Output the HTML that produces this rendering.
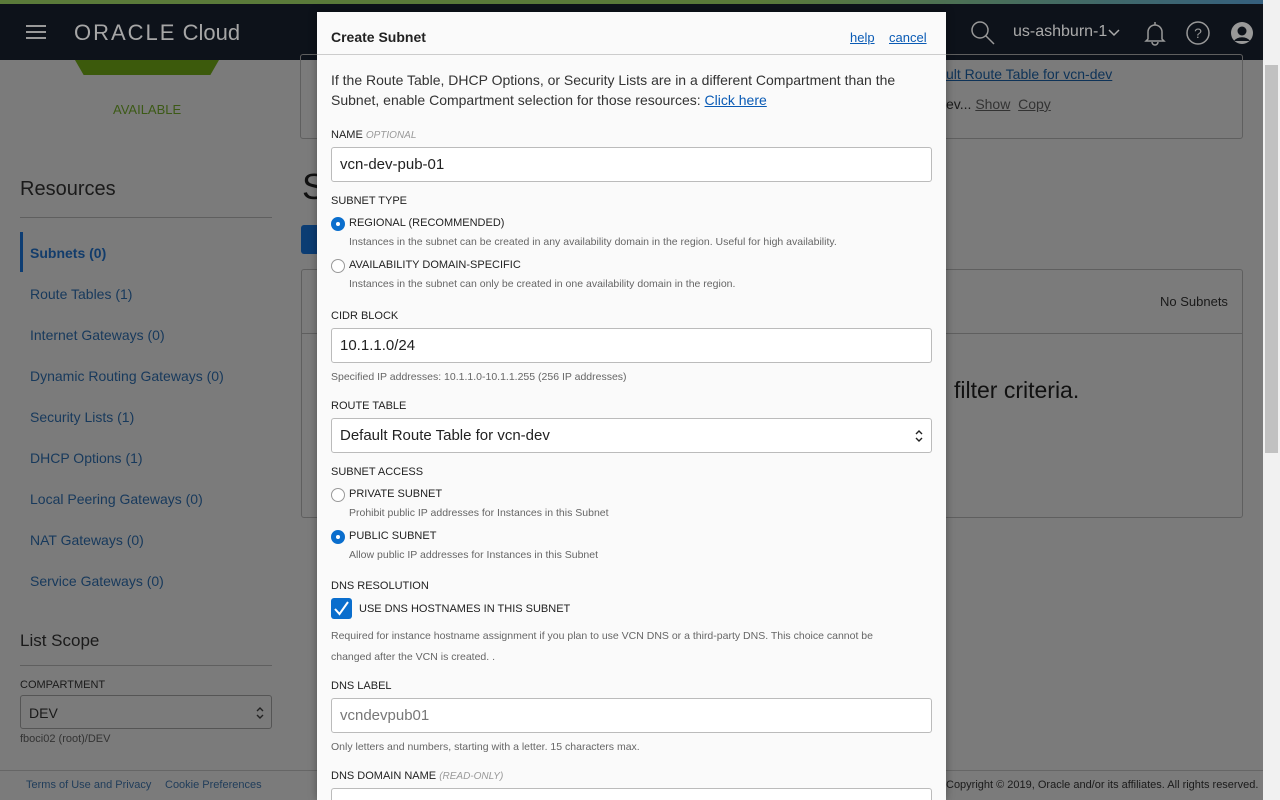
<!DOCTYPE html>
<html style="overflow:hidden;width:1280px;height:800px"><head><meta charset="utf-8"><style>
*{box-sizing:border-box;margin:0;padding:0}
body{width:1280px;height:800px;overflow:hidden;position:relative;background:#7b7b7b;font-family:"Liberation Sans",sans-serif;color:#1e1e1e}
.abs{position:absolute}
.stripe{left:0;top:0;width:1263px;height:4px;background:linear-gradient(90deg,#5a7a3a,#5a7a3a 60%,#35607e)}
.nav{left:0;top:4px;width:1263px;height:56px;background:#0d121a}
.sb{left:1263px;top:0;width:17px;height:800px;background:#f1f1f1}
.thumb{left:1265px;top:65px;width:13px;height:388px;background:#c1c1c1}
.side{position:absolute;left:30px;font-size:14px;color:#17395c}
.modal{left:317px;top:12px;width:629px;height:788px;overflow:hidden;background:#fafafa;box-shadow:0 0 8px rgba(0,0,0,.35)}
.m{position:absolute;left:14px}
.lbl{font-size:11px;color:#222;text-transform:uppercase}
.inp{position:absolute;left:14px;width:601px;height:35px;border:1px solid #bbb;border-radius:3px;background:#fff;font-size:15px;padding:8px 8px;color:#222}
.hint{font-size:10.5px;color:#666}
.radio{position:absolute;left:14px;width:14px;height:14px;border-radius:50%;border:1px solid #999;background:#fff}
.radio.on{background:#0a6ecd;border-color:#0a6ecd}
.radio.on::after{content:"";position:absolute;left:4px;top:4px;width:4px;height:4px;border-radius:50%;background:#fff}
.rl{position:absolute;left:32px;font-size:11px;color:#222}
.rh{position:absolute;left:32px;font-size:10.5px;color:#666}
</style></head><body>
<div class="abs stripe"></div>
<div class="abs nav">
 <div class="abs" style="left:26px;top:21px;width:20px;height:2px;background:#999;box-shadow:0 6px 0 #999,0 12px 0 #999"></div>
 <div class="abs" style="left:74px;top:16px;font-size:22px;color:#a6a6a6;letter-spacing:2px">ORACLE<span style="letter-spacing:0"> Cloud</span></div>
 <svg class="abs" style="left:970px;top:16px" width="26" height="26" viewBox="0 0 26 26" fill="none" stroke="#999" stroke-width="1.5"><circle cx="10" cy="10" r="8"/><path d="M16 16l8 8"/></svg>
 <div class="abs" style="left:1013px;top:19px;font-size:16px;color:#aaa">us-ashburn-1</div>
 <svg class="abs" style="left:1107px;top:24px" width="14" height="10" viewBox="0 0 14 10" fill="none" stroke="#aaa" stroke-width="1.5"><path d="M2 2l5 5 5-5"/></svg>
 <svg class="abs" style="left:1143px;top:16px" width="24" height="26" viewBox="0 0 24 26" fill="none" stroke="#999" stroke-width="1.5"><path d="M12 2v3M5 19V12a7 7 0 0 1 14 0v7l2 2H3z M9 22a3 3 0 0 0 6 0"/></svg>
 <svg class="abs" style="left:1186px;top:17px" width="24" height="24" viewBox="0 0 24 24" fill="none" stroke="#999" stroke-width="1.5"><circle cx="12" cy="12" r="11"/><text x="12" y="17" font-size="14" text-anchor="middle" fill="#999" stroke="none" font-family="Liberation Sans">?</text></svg>
 <svg class="abs" style="left:1230px;top:17px" width="24" height="24" viewBox="0 0 24 24"><circle cx="12" cy="12" r="11" fill="#999"/><circle cx="12" cy="10" r="4.5" fill="#0d121a"/><path d="M4 20a9 7 0 0 1 16 0" fill="#0d121a"/></svg>
</div>
<div class="abs sb"></div><div class="abs thumb"></div>
<div class="abs" style="left:75px;top:60px;width:144px;height:15px;background:#3c5a0c;clip-path:polygon(0 0,100% 0,94% 100%,6% 100%)"></div>
<div class="abs" style="left:113px;top:102px;font-size:13px;color:#3c5a16">AVAILABLE</div>
<div class="abs" style="left:20px;top:178px;font-size:20px;color:#1a1a1a">Resources</div>
<div class="abs" style="left:20px;top:217px;width:252px;height:1px;background:#5f5f5f"></div>
<div class="abs" style="left:20px;top:232px;width:3px;height:40px;background:#0d3d73"></div>
<div class="side" style="top:245px;font-weight:bold;color:#123c6b">Subnets (0)</div>
<div class="side" style="top:286px">Route Tables (1)</div>
<div class="side" style="top:327px">Internet Gateways (0)</div>
<div class="side" style="top:368px">Dynamic Routing Gateways (0)</div>
<div class="side" style="top:409px">Security Lists (1)</div>
<div class="side" style="top:450px">DHCP Options (1)</div>
<div class="side" style="top:491px">Local Peering Gateways (0)</div>
<div class="side" style="top:532px">NAT Gateways (0)</div>
<div class="side" style="top:573px">Service Gateways (0)</div>
<div class="abs" style="left:20px;top:631px;font-size:17px;color:#1a1a1a">List Scope</div>
<div class="abs" style="left:20px;top:665px;width:252px;height:1px;background:#5f5f5f"></div>
<div class="abs" style="left:20px;top:679px;font-size:11px;color:#1a1a1a">COMPARTMENT</div>
<div class="abs" style="left:20px;top:695px;width:252px;height:34px;border:1px solid #555;border-radius:3px;font-size:14px;padding:9px 8px;color:#1a1a1a">DEV<svg style="position:absolute;right:6px;top:9px" width="10" height="16" viewBox="0 0 10 16" fill="none" stroke="#222" stroke-width="1.4"><path d="M2 6l3-3 3 3M2 10l3 3 3-3"/></svg></div>
<div class="abs" style="left:20px;top:733px;font-size:11px;color:#333">fboci02 (root)/DEV</div>
<div class="abs" style="left:0;top:770px;width:1263px;height:1px;background:#666"></div>
<div class="abs" style="left:26px;top:779px;font-size:11px;color:#1f3c5a">Terms of Use and Privacy</div>
<div class="abs" style="left:165px;top:779px;font-size:11px;color:#1f3c5a">Cookie Preferences</div>
<div class="abs" style="left:946px;top:779px;font-size:11px;color:#1a1a1a">Copyright © 2019, Oracle and/or its affiliates. All rights reserved.</div>
<div class="abs" style="left:300px;top:54px;width:943px;height:85px;border:1px solid #5f5f5f;border-radius:3px"></div>
<div class="abs" style="left:946px;top:66px;font-size:14px;color:#0e3358;text-decoration:underline">ult Route Table for vcn-dev</div>
<div class="abs" style="left:946px;top:96px;font-size:14px;color:#1a1a1a">ev... <u style="color:#333">Show</u>&nbsp; <u style="color:#333">Copy</u></div>
<div class="abs" style="left:302px;top:166px;font-size:36px;color:#111">S</div>
<div class="abs" style="left:301px;top:225px;width:20px;height:29px;background:#0c3d73;border-radius:3px"></div>
<div class="abs" style="left:301px;top:269px;width:942px;height:249px;border:1px solid #5f5f5f;border-radius:3px"></div>
<div class="abs" style="left:301px;top:333px;width:942px;height:1px;background:#5f5f5f"></div>
<div class="abs" style="left:1160px;top:294px;font-size:13px;color:#1a1a1a">No Subnets</div>
<div class="abs" style="left:954px;top:377px;font-size:23px;color:#111">filter criteria.</div>
<div class="abs modal">
 <div class="m" style="top:17px;font-size:14px;font-weight:bold;color:#222">Create Subnet</div>
 <div class="abs" style="left:533px;top:18px;font-size:13px;color:#0a5bb5;text-decoration:underline">help</div>
 <div class="abs" style="left:572px;top:18px;font-size:13px;color:#0a5bb5;text-decoration:underline">cancel</div>
 <div class="abs" style="left:0;top:42px;width:629px;height:1px;background:#ccc"></div>
 <div class="m" style="top:58px;font-size:14px;line-height:20px;color:#333;width:590px">If the Route Table, DHCP Options, or Security Lists are in a different Compartment than the Subnet, enable Compartment selection for those resources: <span style="color:#0a5bb5;text-decoration:underline">Click here</span></div>
 <div class="m lbl" style="top:117px">Name <i style="color:#999;font-size:10px">OPTIONAL</i></div>
 <div class="inp" style="top:135px">vcn-dev-pub-01</div>
 <div class="m lbl" style="top:183px">Subnet Type</div>
 <div class="radio on" style="top:205px"></div><div class="rl" style="top:205px">REGIONAL (RECOMMENDED)</div>
 <div class="rh" style="top:224px">Instances in the subnet can be created in any availability domain in the region. Useful for high availability.</div>
 <div class="radio" style="top:247px"></div><div class="rl" style="top:247px">AVAILABILITY DOMAIN-SPECIFIC</div>
 <div class="rh" style="top:266px">Instances in the subnet can only be created in one availability domain in the region.</div>
 <div class="m lbl" style="top:298px">CIDR Block</div>
 <div class="inp" style="top:316px">10.1.1.0/24</div>
 <div class="m hint" style="top:359px">Specified IP addresses: 10.1.1.0-10.1.1.255 (256 IP addresses)</div>
 <div class="m lbl" style="top:388px">Route Table</div>
 <div class="inp" style="top:406px">Default Route Table for vcn-dev<svg style="position:absolute;right:7px;top:9px" width="10" height="16" viewBox="0 0 10 16" fill="none" stroke="#222" stroke-width="1.4"><path d="M2 6l3-3 3 3M2 10l3 3 3-3"/></svg></div>
 <div class="m lbl" style="top:454px">Subnet Access</div>
 <div class="radio" style="top:476px"></div><div class="rl" style="top:476px">PRIVATE SUBNET</div>
 <div class="rh" style="top:495px">Prohibit public IP addresses for Instances in this Subnet</div>
 <div class="radio on" style="top:518px"></div><div class="rl" style="top:518px">PUBLIC SUBNET</div>
 <div class="rh" style="top:537px">Allow public IP addresses for Instances in this Subnet</div>
 <div class="m lbl" style="top:568px">DNS Resolution</div>
 <div class="abs" style="left:14px;top:586px;width:21px;height:21px;background:#0a6ecd;border-radius:3px"><svg width="21" height="21" viewBox="0 0 21 21"><path d="M4 11l4.5 5L17 4" fill="none" stroke="#fff" stroke-width="2"/></svg></div>
 <div class="abs" style="left:42px;top:591px;font-size:11px;color:#222">USE DNS HOSTNAMES IN THIS SUBNET</div>
 <div class="m hint" style="top:614px;line-height:21px;width:560px">Required for instance hostname assignment if you plan to use VCN DNS or a third-party DNS. This choice cannot be changed after the VCN is created. .</div>
 <div class="m lbl" style="top:668px">DNS Label</div>
 <div class="inp" style="top:686px;color:#777">vcndevpub01</div>
 <div class="m hint" style="top:729px">Only letters and numbers, starting with a letter. 15 characters max.</div>
 <div class="m lbl" style="top:758px">DNS Domain Name <i style="color:#999;font-size:10px">(READ-ONLY)</i></div>
 <div class="inp" style="top:776px"></div>
</div>
</body></html>
